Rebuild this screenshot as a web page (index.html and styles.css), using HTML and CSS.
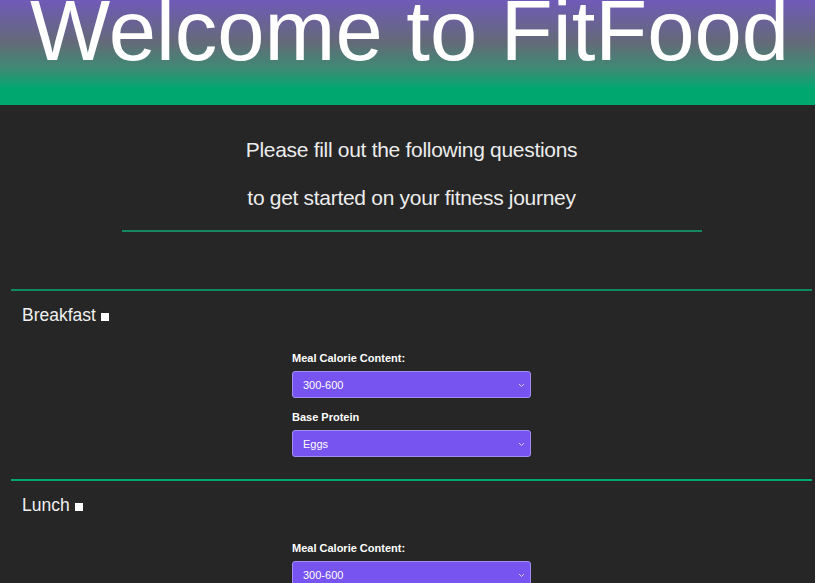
FILE: index.html
```html
<!DOCTYPE html>
<html>
<head>
<meta charset="utf-8">
<link rel="stylesheet" href="styles.css">
</head>
<body>
<header class="hero">
  <h1 class="hero-title">Welcome to FitFood</h1>
</header>
<section class="intro">
  <p class="intro-line">Please fill out the following questions</p>
  <p class="intro-line">to get started on your fitness journey</p>
  <hr class="intro-rule">
</section>
<section class="meal meal-first">
  <div class="meal-head"><span class="meal-name">Breakfast</span><span class="meal-check"></span></div>
  <div class="meal-form">
    <label class="field-label">Meal Calorie Content:</label>
    <div class="select"><span>300-600</span><svg class="chev" width="7" height="5" viewBox="0 0 7 5"><path d="M1 1l2.5 2.5L6 1" fill="none" stroke="#d8ccff" stroke-width="1"/></svg></div>
    <label class="field-label">Base Protein</label>
    <div class="select"><span>Eggs</span><svg class="chev" width="7" height="5" viewBox="0 0 7 5"><path d="M1 1l2.5 2.5L6 1" fill="none" stroke="#d8ccff" stroke-width="1"/></svg></div>
  </div>
</section>
<section class="meal meal-second">
  <div class="meal-head"><span class="meal-name">Lunch</span><span class="meal-check"></span></div>
  <div class="meal-form">
    <label class="field-label">Meal Calorie Content:</label>
    <div class="select"><span>300-600</span><svg class="chev" width="7" height="5" viewBox="0 0 7 5"><path d="M1 1l2.5 2.5L6 1" fill="none" stroke="#d8ccff" stroke-width="1"/></svg></div>
  </div>
</section>
</body>
</html>
```
FILE: styles.css
```css
html, body {
  margin: 0;
  padding: 0;
  background: #262626;
  font-family: "Liberation Sans", Arial, sans-serif;
  color: #fff;
  overflow: hidden;
}
.hero {
  height: 105px;
  background: linear-gradient(to bottom, #705ab8 0%, #646a78 40%, #3f8a74 65%, #00a870 85%, #00a870 100%);
  overflow: hidden;
  display: flex;
  justify-content: center;
}
.hero-title {
  margin: 0;
  font-size: 85px;
  font-weight: 300;
  line-height: 84px;
  margin-top: -11px;
  margin-left: 4px;
  color: #fff;
  white-space: nowrap;
}
.intro {
  display: flex;
  flex-direction: column;
  align-items: center;
  padding-top: 21px;
  padding-left: 8px;
}
.intro-line {
  margin: 0;
  font-size: 21px;
  line-height: 48px;
  color: #ececec;
  letter-spacing: -0.3px;
}
.intro-rule {
  width: 580px;
  border: 0;
  height: 2px;
  background: #14875f;
  margin: 8px 0 0;
}
.meal {
  margin: 0 3px 0 11px;
  border-top: 2px solid #0f8a5e;
}
.meal-first { margin-top: 57px; }
.meal-second { margin-top: 10px; border-top-color: #00a86c; }
.meal-head {
  display: flex;
  align-items: center;
  padding: 13px 0 0 11px;
  height: 22px;
}
.meal-name {
  font-size: 17.5px;
  color: #f0f0f0;
}
.meal-check {
  width: 8px;
  height: 8px;
  background: #fff;
  margin-left: 5px;
  margin-top: 3px;
}
.meal-form {
  width: 239px;
  margin: 25px 0 0 281px;
  display: flex;
  flex-direction: column;
}
.field-label {
  font-size: 11px;
  font-weight: bold;
  color: #fff;
  line-height: 14px;
  margin-bottom: 6px;
}
.select {
  height: 25px;
  border: 1px solid #a38df2;
  border-radius: 3px;
  background: #7753ef;
  display: flex;
  align-items: center;
  justify-content: space-between;
  padding: 0 5px 0 10px;
  font-size: 11px;
  color: #fff;
  margin-bottom: 12px;
}
.chev { margin-top: 1px; }
```
